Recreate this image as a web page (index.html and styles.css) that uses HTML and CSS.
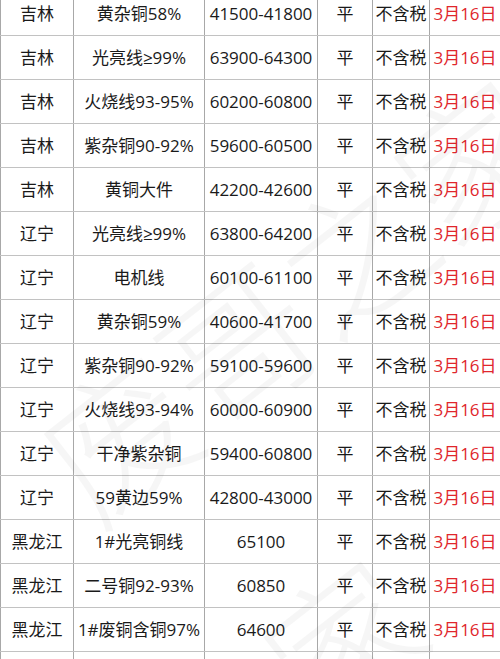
FILE: index.html
```html
<!DOCTYPE html>
<html lang="zh">
<head>
<meta charset="utf-8">
<link rel="stylesheet" href="styles.css">
</head>
<body>
<div class="sheet">
<table class="grid">
<colgroup>
<col class="c1"><col class="c2"><col class="c3"><col class="c4"><col class="c5"><col class="c6">
</colgroup>
<tbody>
<tr><td>吉林</td><td>黄杂铜58%</td><td>41500-41800</td><td>平</td><td>不含税</td><td class="date">3月16日</td></tr>
<tr><td>吉林</td><td>光亮线≥99%</td><td>63900-64300</td><td>平</td><td>不含税</td><td class="date">3月16日</td></tr>
<tr><td>吉林</td><td>火烧线93-95%</td><td>60200-60800</td><td>平</td><td>不含税</td><td class="date">3月16日</td></tr>
<tr><td>吉林</td><td>紫杂铜90-92%</td><td>59600-60500</td><td>平</td><td>不含税</td><td class="date">3月16日</td></tr>
<tr><td>吉林</td><td>黄铜大件</td><td>42200-42600</td><td>平</td><td>不含税</td><td class="date">3月16日</td></tr>
<tr><td>辽宁</td><td>光亮线≥99%</td><td>63800-64200</td><td>平</td><td>不含税</td><td class="date">3月16日</td></tr>
<tr><td>辽宁</td><td>电机线</td><td>60100-61100</td><td>平</td><td>不含税</td><td class="date">3月16日</td></tr>
<tr><td>辽宁</td><td>黄杂铜59%</td><td>40600-41700</td><td>平</td><td>不含税</td><td class="date">3月16日</td></tr>
<tr><td>辽宁</td><td>紫杂铜90-92%</td><td>59100-59600</td><td>平</td><td>不含税</td><td class="date">3月16日</td></tr>
<tr><td>辽宁</td><td>火烧线93-94%</td><td>60000-60900</td><td>平</td><td>不含税</td><td class="date">3月16日</td></tr>
<tr><td>辽宁</td><td>干净紫杂铜</td><td>59400-60800</td><td>平</td><td>不含税</td><td class="date">3月16日</td></tr>
<tr><td>辽宁</td><td>59黄边59%</td><td>42800-43000</td><td>平</td><td>不含税</td><td class="date">3月16日</td></tr>
<tr><td>黑龙江</td><td>1#光亮铜线</td><td>65100</td><td>平</td><td>不含税</td><td class="date">3月16日</td></tr>
<tr><td>黑龙江</td><td>二号铜92-93%</td><td>60850</td><td>平</td><td>不含税</td><td class="date">3月16日</td></tr>
<tr><td>黑龙江</td><td>1#废铜含铜97%</td><td>64600</td><td>平</td><td>不含税</td><td class="date">3月16日</td></tr>
<tr><td></td><td></td><td></td><td></td><td></td><td></td></tr>
</tbody>
</table>
<div class="mark mark-a">废哥之家</div>
<div class="mark mark-b">废哥之家</div>
</div>
</body>
</html>
```
FILE: styles.css
```css
html, body {
  margin: 0;
  padding: 0;
  background: #ffffff;
  overflow: hidden;
}
body {
  width: 500px;
  height: 659px;
  font-family: "Open Sans", "Noto Sans CJK SC", sans-serif;
}
.sheet {
  position: relative;
  width: 500px;
  height: 659px;
  overflow: hidden;
}
.grid {
  border-collapse: collapse;
  table-layout: fixed;
  width: 500px;
  margin-top: -9px;
  font-size: 17px;
  color: #1a1a1a;
}
.c1 { width: 73px; }
.c2 { width: 131px; }
.c3 { width: 113px; }
.c4 { width: 55px; }
.c5 { width: 57px; }
.c6 { width: 71px; }
.grid td {
  height: 43px;
  padding: 0;
  text-align: center;
  vertical-align: middle;
  white-space: nowrap;
  border-top: 1px solid #c2c2c2;
  border-bottom: 1px solid #c2c2c2;
  border-left: 1px solid #a8a8a8;
  border-right: 1px solid #a8a8a8;
  line-height: 20px;
}
.grid td.date {
  color: #e0262c;
}
.mark {
  position: absolute;
  font-family: "Noto Sans CJK SC", sans-serif;
  font-weight: 300;
  font-size: 150px;
  line-height: 1;
  color: rgba(0, 0, 0, 0.035);
  white-space: nowrap;
  transform-origin: left top;
  pointer-events: none;
}
.mark-a {
  left: 10px;
  top: 420px;
  transform: rotate(-38deg);
}
.mark-b {
  left: -120px;
  top: 900px;
  transform: rotate(-38deg);
}
```
